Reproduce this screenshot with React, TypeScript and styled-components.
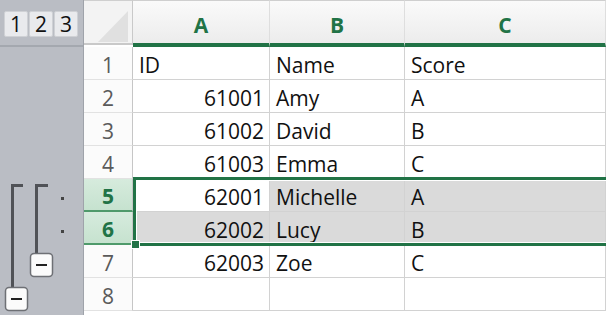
import React from 'react';
import styled, { createGlobalStyle } from 'styled-components';

const GlobalStyle = createGlobalStyle`
  html, body {
    margin: 0;
    padding: 0;
    background: #ffffff;
    overflow: hidden;
  }
  body {
    font-family: 'Open Sans', 'Liberation Sans', sans-serif;
  }
`;

const GREEN = '#217346';
const GRID = '#d2d2d2';
const COLS = '49px 137px 135px 201px';

const Window = styled.div`
  display: flex;
  width: 606px;
  height: 315px;
  overflow: hidden;
`;

const Gutter = styled.div`
  width: 83px;
  flex: none;
  display: flex;
  flex-direction: column;
  background: #babdc4;
  border-right: 1px solid #9fa3aa;
`;

const LevelBar = styled.div`
  height: 47px;
  flex: none;
  display: flex;
  align-items: flex-start;
  gap: 1px;
  padding: 11px 0 0 4px;
  box-sizing: border-box;
  border-bottom: 2px solid #a4a8af;
`;

const LevelButton = styled.div`
  width: 24px;
  height: 26px;
  box-sizing: border-box;
  display: flex;
  align-items: center;
  justify-content: center;
  padding-top: 1px;
  background: #e9eaed;
  border: 1px solid #cfd1d5;
  border-radius: 2px;
  font-size: 21px;
  color: #111;
  line-height: 1;
`;

const OutlineArea = styled.div`
  flex: 1;
`;

const Sheet = styled.div`
  flex: 1;
  display: flex;
  flex-direction: column;
`;

const HeaderRow = styled.div`
  display: grid;
  grid-template-columns: ${COLS};
  height: 47px;
  flex: none;
`;

const Corner = styled.div`
  background: #f3f3f3;
  border-right: 1px solid #c9c9c9;
  border-bottom: 2px solid #c9c9c9;
  border-top: 1px solid #cfcfcf;
  box-sizing: border-box;
  height: 45px;
`;

const ColHead = styled.div`
  display: flex;
  align-items: center;
  justify-content: center;
  padding-top: 5px;
  box-sizing: border-box;
  background: linear-gradient(#fafafa, #ececec);
  border-top: 1px solid #cfcfcf;
  border-right: 1px solid #dedede;
  border-bottom: 4px solid ${GREEN};
  color: ${GREEN};
  font-weight: 700;
  font-size: 21px;
`;

const Row = styled.div`
  display: grid;
  grid-template-columns: ${COLS};
  height: 33px;
  flex: none;
`;

const RowHead = styled.div<{ $active?: boolean }>`
  display: flex;
  align-items: center;
  justify-content: center;
  padding-top: 3px;
  box-sizing: border-box;
  font-size: 21px;
  background: ${(p) => (p.$active ? 'linear-gradient(#d6ebdd, #c6e2cf)' : '#fbfbfb')};
  color: ${(p) => (p.$active ? GREEN : '#5a5a5a')};
  font-weight: ${(p) => (p.$active ? 700 : 400)};
  border-right: 1px solid #c6c6c6;
  border-bottom: ${(p) => (p.$active ? `2px solid #4f9a6b` : `1px solid #e2e2e2`)};
`;

const Cell = styled.div<{ $num?: boolean; $shade?: boolean }>`
  display: flex;
  align-items: center;
  justify-content: ${(p) => (p.$num ? 'flex-end' : 'flex-start')};
  padding: 3px 5px 0 6px;
  box-sizing: border-box;
  font-size: 21px;
  color: #111;
  white-space: nowrap;
  overflow: hidden;
  background: ${(p) => (p.$shade ? '#dadada' : '#ffffff')};
  border-right: 1px solid ${GRID};
  border-bottom: 1px solid ${GRID};
`;

const SelectionGroup = styled.div`
  position: relative;
  display: flex;
  flex-direction: column;
`;

const SelectionFrame = styled.div`
  position: absolute;
  left: 49px;
  right: -4px;
  top: -2px;
  bottom: -1px;
  border: 3px solid ${GREEN};
  box-shadow: inset 0 0 0 1px #ffffff;
  pointer-events: none;
`;

const FillHandle = styled.div`
  position: absolute;
  left: 47px;
  bottom: -4px;
  width: 7px;
  height: 7px;
  background: ${GREEN};
  border: 1px solid #ffffff;
`;

type Rec = { n: number; id: string; name: string; score: string };

const rows: Rec[] = [
  { n: 1, id: 'ID', name: 'Name', score: 'Score' },
  { n: 2, id: '61001', name: 'Amy', score: 'A' },
  { n: 3, id: '61002', name: 'David', score: 'B' },
  { n: 4, id: '61003', name: 'Emma', score: 'C' },
  { n: 5, id: '62001', name: 'Michelle', score: 'A' },
  { n: 6, id: '62002', name: 'Lucy', score: 'B' },
  { n: 7, id: '62003', name: 'Zoe', score: 'C' },
  { n: 8, id: '', name: '', score: '' },
];

const SheetRow = ({ r, active, activeCell }: { r: Rec; active?: boolean; activeCell?: boolean }) => {
  const isNum = /^\d+$/.test(r.id);
  return (
    <Row>
      <RowHead $active={active}>{r.n}</RowHead>
      <Cell $num={isNum} $shade={active && !activeCell}>{r.id}</Cell>
      <Cell $shade={active}>{r.name}</Cell>
      <Cell $shade={active}>{r.score}</Cell>
    </Row>
  );
};

// outline brackets for the grouped rows (coords relative to the top of row 1)
const Outline = () => (
  <svg width="83" height="268" viewBox="0 0 83 268" style={{ display: 'block' }}>
    <g fill="none" stroke="#505257" strokeWidth="3">
      <path d="M12.5 240 V138.5 H23" />
      <path d="M36.5 206 V138.5 H48" />
    </g>
    <rect x="61" y="150" width="3" height="3" fill="#444" />
    <rect x="61" y="183" width="3" height="3" fill="#444" />
    <rect x="30.5" y="206.5" width="22" height="23" rx="3.5" fill="#fbfbfb" stroke="#6e7075" strokeWidth="1.5" />
    <path d="M36 218 H47" stroke="#222" strokeWidth="2" />
    <rect x="5.5" y="240.5" width="22" height="23" rx="3.5" fill="#fbfbfb" stroke="#6e7075" strokeWidth="1.5" />
    <path d="M11 252 H22" stroke="#222" strokeWidth="2" />
  </svg>
);

export default function App() {
  return (
    <>
      <GlobalStyle />
      <Window>
        <Gutter>
          <LevelBar>
            <LevelButton>1</LevelButton>
            <LevelButton>2</LevelButton>
            <LevelButton>3</LevelButton>
          </LevelBar>
          <OutlineArea>
            <Outline />
          </OutlineArea>
        </Gutter>
        <Sheet>
          <HeaderRow>
            <Corner>
              <svg width="48" height="42" viewBox="0 0 48 42" style={{ display: 'block' }}>
                <path d="M44 10 V41 H14 Z" fill="#e0e0e0" />
              </svg>
            </Corner>
            <ColHead>A</ColHead>
            <ColHead>B</ColHead>
            <ColHead>C</ColHead>
          </HeaderRow>
          {rows.slice(0, 4).map((r) => (
            <SheetRow key={r.n} r={r} />
          ))}
          <SelectionGroup>
            <SheetRow r={rows[4]} active activeCell />
            <SheetRow r={rows[5]} active />
            <SelectionFrame />
            <FillHandle />
          </SelectionGroup>
          {rows.slice(6).map((r) => (
            <SheetRow key={r.n} r={r} />
          ))}
        </Sheet>
      </Window>
    </>
  );
}
